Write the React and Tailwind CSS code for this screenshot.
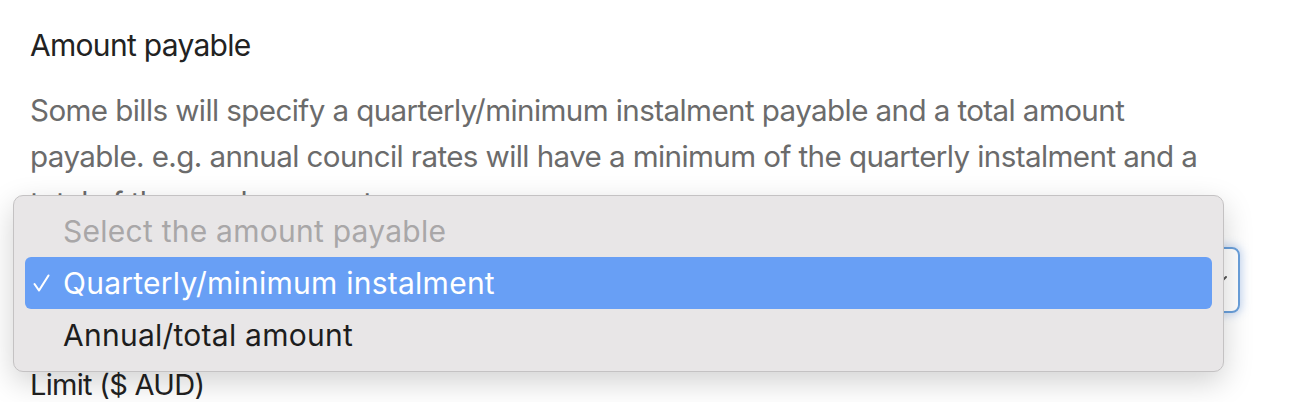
import React from "react";

export default function App() {
  return (
    <div className="relative w-[1298px] h-[402px] overflow-hidden bg-white" style={{ fontFamily: "Inter, 'Liberation Sans', sans-serif" }}>
      <div className="px-[30px] pt-[28px]">
        <h2 className="text-[30px] leading-[34px] text-[#222222] tracking-[-0.7px]">Amount payable</h2>
        <p className="mt-[25px] text-[29.6px] leading-[46px] text-[#6b6b6b] tracking-[-0.6px] w-[1200px]">
          Some bills will specify a quarterly/minimum instalment payable and a total amount payable. e.g. annual council rates will have a minimum of the quarterly instalment and a total of the yearly amount.
        </p>
        <div className="mt-[22px] w-[1210px] h-[66px] rounded-[8px] border-2 border-[#6aa0dc] shadow-[0_0_8px_2px_rgba(100,150,220,0.35)] flex items-center justify-end pr-[8px]">
          <svg width="18" height="12" viewBox="0 0 18 12" className="mr-[2px]">
            <path d="M2 3 L9 10 L16 3" fill="none" stroke="#555" strokeWidth="2" strokeLinecap="round" />
          </svg>
        </div>
        <div className="mt-[55px] text-[29px] leading-[34px] text-[#222222] tracking-[-0.7px]">Limit ($ AUD)</div>
      </div>

      <div
        className="absolute left-[13px] top-[195px] w-[1211px] h-[177px] rounded-[10px] bg-[#e8e6e7] border border-[#c4c2c3] shadow-[0_10px_30px_rgba(0,0,0,0.18)] px-[11px] py-[9px] flex flex-col text-[30px] tracking-[0.25px]"
        style={{ fontFamily: "Inter, 'Liberation Sans', sans-serif" }}
      >
        <div className="h-[52px] flex items-center pl-[38px] text-[#a9a7a8]">Select the amount payable</div>
        <div className="h-[52px] flex items-center rounded-[6px] bg-[#689ff5] text-white">
          <span className="w-[38px] pl-[8px] flex items-center">
            <svg width="17" height="18" viewBox="0 0 17 18">
              <path d="M1.5 10 L6 16.5 L15.5 1.5" fill="none" stroke="#ffffff" strokeWidth="2.1" strokeLinecap="round" strokeLinejoin="round" />
            </svg>
          </span>
          <span>Quarterly/minimum instalment</span>
        </div>
        <div className="h-[52px] flex items-center pl-[38px] text-[#1d1d1d]">Annual/total amount</div>
      </div>
    </div>
  );
}
